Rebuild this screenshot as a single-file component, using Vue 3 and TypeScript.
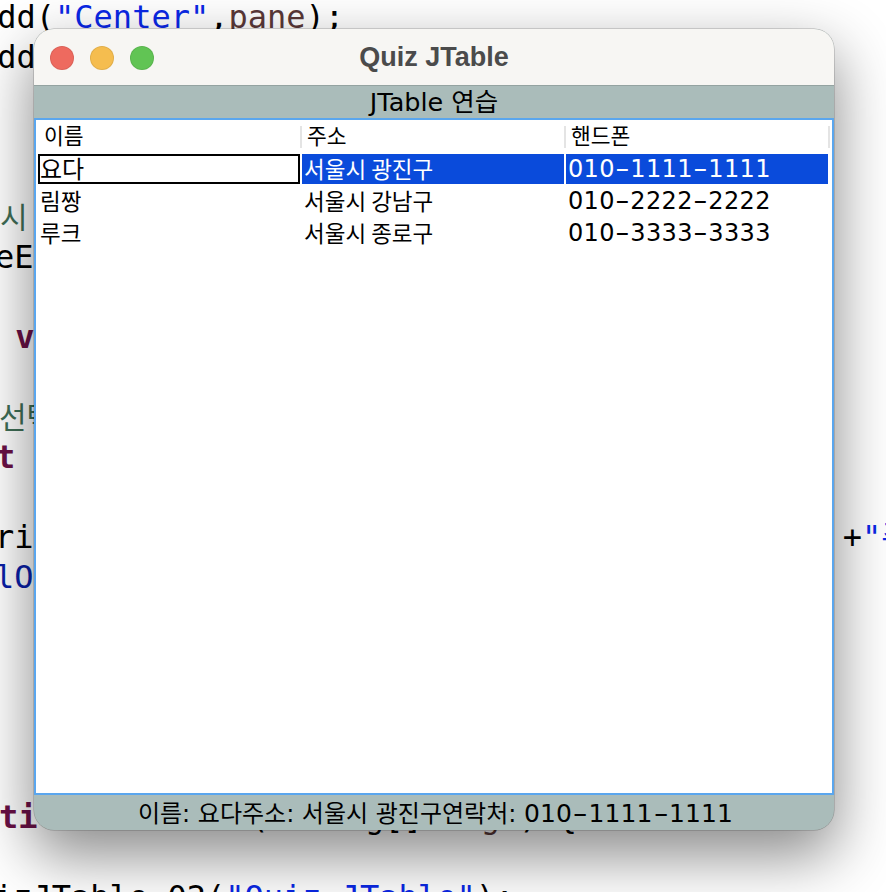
<script setup lang="ts">
interface Seg { t: string; c?: string }
interface Line { x?: number; segs: Seg[] }

const code: Line[] = [
  { x: -22, segs: [{ t: 'add(' }, { t: '"Center"', c: 'str' }, { t: ',' }, { t: 'pane', c: 'var' }, { t: ');' }] },
  { x: -22, segs: [{ t: 'add(table);' }] },
  { segs: [] },
  { segs: [] },
  { segs: [] },
  { x: 0, segs: [{ t: '시', c: 'cmt' }] },
  { x: -5, segs: [{ t: 'eE' }] },
  { segs: [] },
  { x: -4, segs: [{ t: ' v', c: 'kw' }] },
  { segs: [] },
  { x: -1, segs: [{ t: '선택', c: 'cmt' }] },
  { x: -4, segs: [{ t: 't', c: 'kw' }] },
  { segs: [] },
  { x: -5, segs: [{ t: 'ri                                          +' }, { t: '"주', c: 'str' }] },
  { x: -5, segs: [{ t: 'lO', c: 'fld' }] },
  { segs: [] },
  { segs: [] },
  { segs: [] },
  { segs: [] },
  { segs: [] },
  { x: -1, segs: [{ t: 'ti', c: 'kw' }, { t: 'c void main(String[] ' }, { t: 'args', c: 'var' }, { t: ') {' }] },
  { segs: [] },
  { x: -6, segs: [{ t: 'izJTable_02(' }, { t: '"Quiz JTable"', c: 'str' }, { t: ');' }] },
]

const columns = ['이름', '주소', '핸드폰']
const rows = [
  { name: '요다', addr: '서울시 광진구', phone: ['010', '1111', '1111'] },
  { name: '림짱', addr: '서울시 강남구', phone: ['010', '2222', '2222'] },
  { name: '루크', addr: '서울시 종로구', phone: ['010', '3333', '3333'] },
]
const selected = 0
</script>

<template>
  <div class="desktop">
    <div class="code">
      <div v-for="(line, i) in code" :key="i" class="code-line" :style="{ marginLeft: (line.x ?? 0) + 'px' }">
        <span v-for="(s, j) in line.segs" :key="j" :class="s.c">{{ s.t }}</span>
      </div>
    </div>

    <div class="window">
      <header class="titlebar">
        <div class="lights">
          <span class="light red"></span>
          <span class="light yellow"></span>
          <span class="light green"></span>
        </div>
        <div class="title">Quiz JTable</div>
      </header>

      <div class="caption">JTable 연습</div>

      <div class="table">
        <div class="thead">
          <div v-for="c in columns" :key="c" class="th">{{ c }}</div>
        </div>
        <div v-for="(r, i) in rows" :key="r.name" class="tr" :class="{ selected: i === selected }">
          <div class="td name">{{ r.name }}</div>
          <div class="td addr">{{ r.addr }}</div>
          <div class="td phone">
            <template v-for="(p, k) in r.phone" :key="k"><span v-if="k > 0" class="dash">-</span>{{ p }}</template>
          </div>
        </div>
      </div>

      <div class="status">이름: 요다주소: 서울시 광진구연락처: <span class="num">010<span class="dash wide">-</span>1111<span class="dash wide">-</span>1111</span></div>
    </div>
  </div>
</template>

<style>
html, body { margin: 0; background: #fff; overflow: hidden; }
</style>

<style scoped>
.desktop {
  position: relative;
  width: 886px;
  height: 892px;
  overflow: hidden;
  background: #fff;
}
.code {
  margin-top: -3px;
  font: 32px/40px "DejaVu Sans Mono", "Noto Sans CJK KR", monospace;
  color: #000;
  white-space: pre;
}
.code-line { height: 40px; }
.str { color: #0a28e6; }
.var { color: #5a3838; }
.cmt { color: #3f6e56; font-size: 30px; }
.kw { color: #6a1046; font-weight: 700; }
.fld { color: #0a1fa8; }

.window {
  position: absolute;
  left: 34px;
  top: 29px;
  width: 800px;
  height: 801px;
  box-sizing: border-box;
  display: flex;
  flex-direction: column;
  border-radius: 20px;
  overflow: hidden;
  background: #aabcba;
  box-shadow: 0 0 0 0.5px rgba(0, 0, 0, 0.28), 0 24px 60px 2px rgba(0, 0, 0, 0.46);
  font-family: "DejaVu Sans", "Noto Sans CJK KR", sans-serif;
  color: #000;
}
.titlebar {
  position: relative;
  flex: none;
  height: 57px;
  box-sizing: border-box;
  background: #f7f6f3;
  border-bottom: 1px solid #94a3a1;
  display: flex;
  align-items: center;
  justify-content: center;
}
.lights {
  position: absolute;
  left: 16px;
  top: 17px;
  display: flex;
  gap: 16px;
}
.light {
  width: 24px;
  height: 24px;
  box-sizing: border-box;
  border-radius: 50%;
  border: 1px solid rgba(0, 0, 0, 0.08);
}
.red { background: #ee6a5f; }
.yellow { background: #f5bd4f; }
.green { background: #61c454; }
.title {
  font: 700 27px "Liberation Sans", sans-serif;
  color: #4b4b4b;
  margin-top: 1px;
}
.caption {
  flex: none;
  height: 32px;
  line-height: 33px;
  text-align: center;
  font-size: 25.5px;
  color: #000;
  white-space: nowrap;
}
.table {
  flex: 1;
  min-height: 0;
  box-sizing: border-box;
  background: #fff;
  border: 2px solid #5aa6ee;
  font-family: "Noto Sans CJK KR", sans-serif;
}
.thead {
  display: grid;
  grid-template-columns: 266px 264px 264px;
  height: 34px;
  align-items: start;
}
.th {
  margin-top: 6px;
  height: 22px;
  box-sizing: border-box;
  border-right: 2px solid #e4e4e4;
  padding-left: 5px;
  font-size: 21.5px;
  line-height: 18px;
}
.th:first-child { padding-left: 8px; }
.tr {
  display: grid;
  grid-template-columns: repeat(3, 262px);
  grid-template-rows: 30px;
  gap: 2px;
  padding-left: 2px;
  height: 30px;
  margin-bottom: 2.2px;
}
.td {
  height: 30px;
  font-size: 22.5px;
  line-height: 28px;
  padding-left: 2px;
  box-sizing: border-box;
  white-space: nowrap;
}
.phone {
  font-family: "DejaVu Sans", sans-serif;
  font-size: 24px;
  letter-spacing: 0.35px;
  line-height: 31px;
  padding-left: 2px;
}
.dash {
  display: inline-block;
  width: 15.5px;
  line-height: 1;
  text-align: center;
  transform: scaleX(1.7);
}
.dash.wide { width: 16.5px; }
.selected .addr, .selected .phone { background: #0a4bdb; color: #fff; }
.selected .name { border: 2px solid #000; padding-left: 0; line-height: 24px; font-size: 24px; }
.status {
  flex: none;
  height: 35px;
  line-height: 37px;
  text-align: center;
  font-size: 24px;
  color: #000;
  white-space: nowrap;
  padding-left: 3px;
}
.num { font-size: 25px; letter-spacing: 0.1px; }
</style>
